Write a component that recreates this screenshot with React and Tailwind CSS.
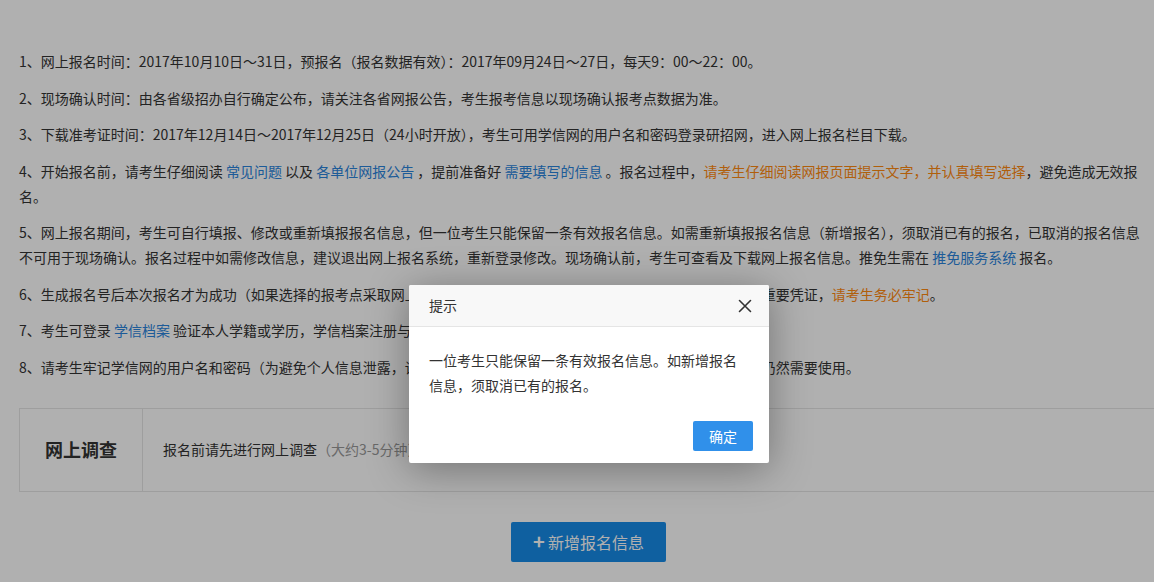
import React from 'react';

const font = { fontFamily: '"Noto Sans CJK SC", "Noto Sans", sans-serif' };

function Link({ children }) {
  return <span className="text-[#2a84dc]">{children}</span>;
}

function Warn({ children }) {
  return <span className="text-[#ff8a10]">{children}</span>;
}

export default function App() {
  return (
    <div className="relative w-[1154px] h-[582px] overflow-hidden bg-white text-[#333]" style={font}>
      {/* page content */}
      <div className="pl-[19px] pr-[6px] pt-[49px] text-[14px] leading-[25px]">
        <p className="mb-[11.5px]">1、网上报名时间：2017年10月10日～31日，预报名（报名数据有效）：2017年09月24日～27日，每天9：00～22：00。</p>
        <p className="mb-[11.5px]">2、现场确认时间：由各省级招办自行确定公布，请关注各省网报公告，考生报考信息以现场确认报考点数据为准。</p>
        <p className="mb-[11.5px]">3、下载准考证时间：2017年12月14日～2017年12月25日（24小时开放），考生可用学信网的用户名和密码登录研招网，进入网上报名栏目下载。</p>
        <p className="mb-[11.5px]">
          4、开始报名前，请考生仔细阅读 <Link>常见问题</Link> 以及 <Link>各单位网报公告</Link> ，提前准备好 <Link>需要填写的信息</Link> 。报名过程中，<Warn>请考生仔细阅读网报页面提示文字，并认真填写选择</Warn>，避免造成无效报名。
        </p>
        <p className="mb-[11.5px]">
          5、网上报名期间，考生可自行填报、修改或重新填报报名信息，但一位考生只能保留一条有效报名信息。如需重新填报报名信息（新增报名），须取消已有的报名，已取消的报名信息不可用于现场确认。报名过程中如需修改信息，建议退出网上报名系统，重新登录修改。现场确认前，考生可查看及下载网上报名信息。推免生需在 <Link>推免服务系统</Link> 报名。
        </p>
        <p className="mb-[11.5px]">
          6、生成报名号后本次报名才为成功（如果选择的报考点采取网上支付，须网上支付成功才为报名成功），报名号是考生的重要凭证，<Warn>请考生务必牢记</Warn>。
        </p>
        <p className="mb-[11.5px]">
          7、考生可登录 <Link>学信档案</Link> 验证本人学籍或学历，学信档案注册与登录方法请参考学信网相关说明。
        </p>
        <p>8、请考生牢记学信网的用户名和密码（为避免个人信息泄露，请勿将密码透露给他人），在后续的复试、录取等各环节中仍然需要使用。</p>
      </div>

      <div className="ml-[19px] mt-[28px] w-[1160px] h-[84px] flex border border-[#e5e5e5]">
        <div className="w-[123px] shrink-0 border-r border-[#e5e5e5] flex items-center justify-center text-[18px] font-bold text-[#333]">
          网上调查
        </div>
        <div className="flex items-center pl-[20px] text-[14px]">
          报名前请先进行网上调查<span className="text-[#999]">（大约3-5分钟）</span>
        </div>
      </div>

      <div className="flex justify-center mt-[30px] pl-[23px]">
        <button className="w-[155px] h-[40px] bg-[#178be8] rounded-[2px] text-white text-[16px] flex items-center justify-center gap-[3px]">
          <span className="font-bold text-[20px] leading-none mt-[-2px]">+</span>
          <span>新增报名信息</span>
        </button>
      </div>

      {/* backdrop */}
      <div className="absolute inset-0 bg-[rgba(0,0,0,0.31)]" />

      {/* dialog */}
      <div className="absolute left-[409px] top-[285px] w-[360px] bg-white rounded-[2px] shadow-[0_6px_40px_rgba(0,0,0,0.35)]">
        <div className="h-[42px] bg-[#f8f8f8] border-b border-[#e5e5e5] flex items-center justify-between pl-[20px] pr-[17px] rounded-t-[2px]">
          <span className="text-[14px] text-[#333]">提示</span>
          <svg width="14" height="14" viewBox="0 0 14 14" fill="none">
            <path d="M1.5 1.5 L12.5 12.5 M12.5 1.5 L1.5 12.5" stroke="#333" strokeWidth="1.6" strokeLinecap="round" />
          </svg>
        </div>
        <div className="px-[20px] pt-[21px] text-[14px] leading-[25px] text-[#333]">
          一位考生只能保留一条有效报名信息。如新增报名信息，须取消已有的报名。
        </div>
        <div className="flex justify-end pr-[16px] pt-[23px] pb-[12px]">
          <button className="w-[60px] h-[30px] bg-[#3090ea] rounded-[2px] text-white text-[14px]">确定</button>
        </div>
      </div>
    </div>
  );
}
